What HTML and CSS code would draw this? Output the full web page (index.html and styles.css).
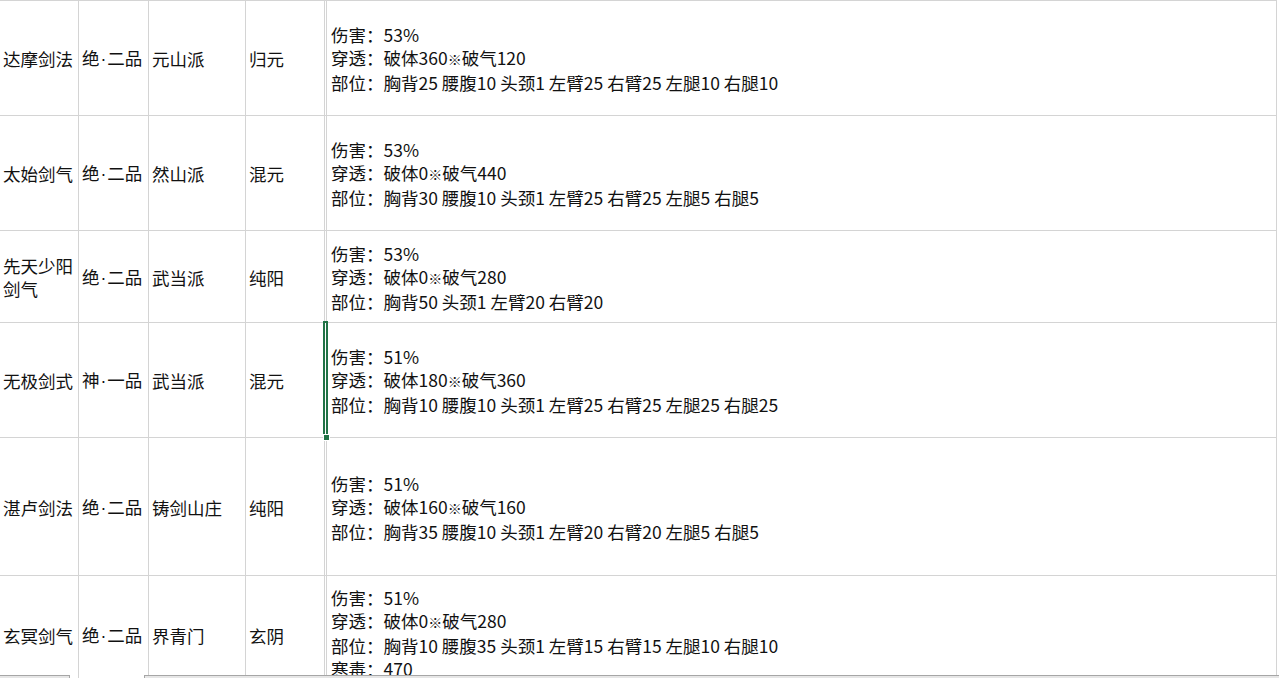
FILE: index.html
```html
<!DOCTYPE html>
<html lang="zh-CN">
<head>
<meta charset="utf-8">
<title>剑法</title>
<link rel="stylesheet" href="styles.css">
</head>
<body>
<div class="sheet">
  <div class="grid">
    <div class="cell"><span>达摩剑法</span></div>
    <div class="cell"><span>绝<span class="dot">·</span>二品</span></div>
    <div class="cell"><span>元山派</span></div>
    <div class="cell"><span>归元</span></div>
    <div class="cell narrow"></div>
    <div class="cell detail"><div class="txt">伤害：53%<br>穿透：破体360<span class="mark">※</span>破气120<br>部位：胸背25 腰腹10 头颈1 左臂25 右臂25 左腿10 右腿10</div></div>

    <div class="cell"><span>太始剑气</span></div>
    <div class="cell"><span>绝<span class="dot">·</span>二品</span></div>
    <div class="cell"><span>然山派</span></div>
    <div class="cell"><span>混元</span></div>
    <div class="cell narrow"></div>
    <div class="cell detail"><div class="txt">伤害：53%<br>穿透：破体0<span class="mark">※</span>破气440<br>部位：胸背30 腰腹10 头颈1 左臂25 右臂25 左腿5 右腿5</div></div>

    <div class="cell wrap"><span>先天少阳剑气</span></div>
    <div class="cell"><span>绝<span class="dot">·</span>二品</span></div>
    <div class="cell"><span>武当派</span></div>
    <div class="cell"><span>纯阳</span></div>
    <div class="cell narrow"></div>
    <div class="cell detail"><div class="txt">伤害：53%<br>穿透：破体0<span class="mark">※</span>破气280<br>部位：胸背50 头颈1 左臂20 右臂20</div></div>

    <div class="cell"><span>无极剑式</span></div>
    <div class="cell"><span>神<span class="dot">·</span>一品</span></div>
    <div class="cell"><span>武当派</span></div>
    <div class="cell"><span>混元</span></div>
    <div class="cell narrow selected"><span class="sel"></span><span class="handle"></span></div>
    <div class="cell detail"><div class="txt">伤害：51%<br>穿透：破体180<span class="mark">※</span>破气360<br>部位：胸背10 腰腹10 头颈1 左臂25 右臂25 左腿25 右腿25</div></div>

    <div class="cell"><span>湛卢剑法</span></div>
    <div class="cell"><span>绝<span class="dot">·</span>二品</span></div>
    <div class="cell"><span>铸剑山庄</span></div>
    <div class="cell"><span>纯阳</span></div>
    <div class="cell narrow"></div>
    <div class="cell detail"><div class="txt">伤害：51%<br>穿透：破体160<span class="mark">※</span>破气160<br>部位：胸背35 腰腹10 头颈1 左臂20 右臂20 左腿5 右腿5</div></div>

    <div class="cell"><span>玄冥剑气</span></div>
    <div class="cell"><span>绝<span class="dot">·</span>二品</span></div>
    <div class="cell"><span>界青门</span></div>
    <div class="cell"><span>玄阴</span></div>
    <div class="cell narrow"></div>
    <div class="cell detail last"><div class="txt">伤害：51%<br>穿透：破体0<span class="mark">※</span>破气280<br>部位：胸背10 腰腹35 头颈1 左臂15 右臂15 左腿10 右腿10<br>寒毒：470</div></div>
  </div>
  <div class="bottom-bar">
    <div class="bar bar-left"></div>
    <div class="bar-gap"></div>
    <div class="bar bar-right"></div>
  </div>
</div>
</body>
</html>
```

FILE: styles.css
```css
html, body {
  margin: 0;
  padding: 0;
  background: #ffffff;
}
body {
  width: 1279px;
  height: 678px;
  overflow: hidden;
  font-family: "Noto Sans CJK SC", "Noto Sans", sans-serif;
  font-size: 17.5px;
  color: #111111;
}
.sheet {
  position: relative;
  width: 1279px;
  height: 678px;
  overflow: hidden;
}
.grid {
  display: grid;
  width: 1277px;
  grid-template-columns: 78px 69px 96px 78px 1px 949px;
  grid-template-rows: 114px 114px 91px 114px 137px 117px;
  gap: 1px;
  background: #d4d4d4;
  padding: 1px 1px 0 0;
  box-sizing: border-box;
}
.cell {
  background: #ffffff;
  display: flex;
  align-items: center;
  padding: 1px 1px 0 3px;
  line-height: 23px;
  white-space: nowrap;
  position: relative;
}
.wrap {
  white-space: normal;
  word-break: break-all;
}
.dot {
  font-family: "Liberation Sans", sans-serif;
  margin: 0 1px;
}
.mark {
  font-size: 14px;
}
.narrow {
  padding: 0;
}
.detail {
  padding-left: 4px;
}
.last {
  padding-top: 0;
  padding-bottom: 3px;
}
.selected {
  z-index: 2;
}
.sel {
  position: absolute;
  left: -2px;
  top: -2px;
  width: 1px;
  height: 113px;
  border: 2px solid #217346;
  background: #ffffff;
}
.handle {
  position: absolute;
  left: -1px;
  top: 112px;
  width: 5px;
  height: 5px;
  background: #217346;
  box-shadow: 0 0 0 1px #ffffff;
}
.bottom-bar {
  position: absolute;
  left: 0;
  bottom: 0;
  width: 1279px;
  height: 3px;
  display: flex;
}
.bar {
  background: #e6e6e6;
  border-top: 1px solid #a6a6a6;
  box-sizing: border-box;
}
.bar-left {
  width: 70px;
  border-right: 1px solid #a6a6a6;
}
.bar-gap {
  width: 74px;
}
.bar-right {
  flex: 1;
  border-left: 1px solid #a6a6a6;
}
```
